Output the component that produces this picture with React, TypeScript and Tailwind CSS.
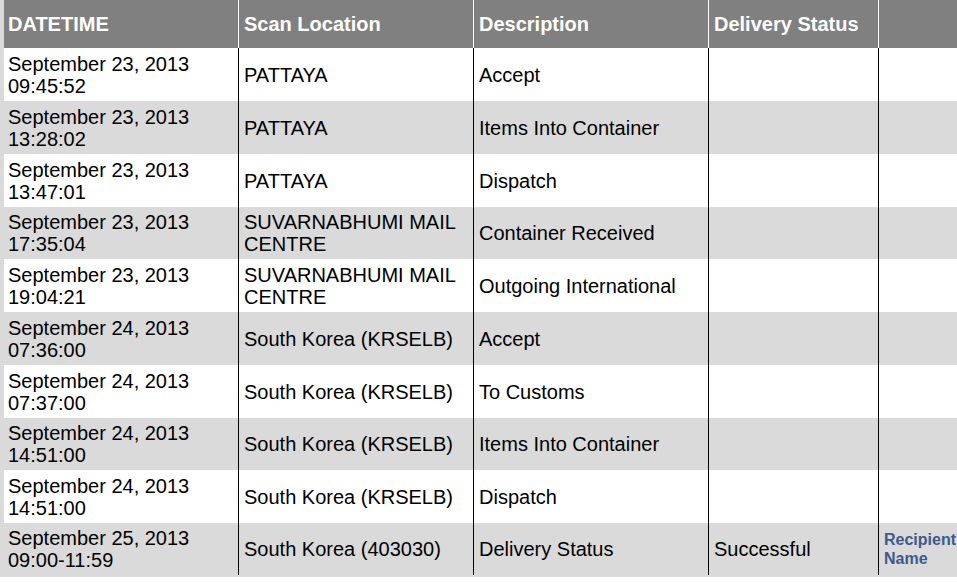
import React from "react";

type Row = { d1: string; d2: string; loc: string[]; desc: string; status?: string; link?: boolean; h: string };

const rows: Row[] = [
  { d1: "September 23, 2013", d2: "09:45:52", loc: ["PATTAYA"], desc: "Accept", h: "h-[53px]" },
  { d1: "September 23, 2013", d2: "13:28:02", loc: ["PATTAYA"], desc: "Items Into Container", h: "h-[53px]" },
  { d1: "September 23, 2013", d2: "13:47:01", loc: ["PATTAYA"], desc: "Dispatch", h: "h-[53px]" },
  { d1: "September 23, 2013", d2: "17:35:04", loc: ["SUVARNABHUMI MAIL", "CENTRE"], desc: "Container Received", h: "h-[52px]" },
  { d1: "September 23, 2013", d2: "19:04:21", loc: ["SUVARNABHUMI MAIL", "CENTRE"], desc: "Outgoing International", h: "h-[53px]" },
  { d1: "September 24, 2013", d2: "07:36:00", loc: ["South Korea (KRSELB)"], desc: "Accept", h: "h-[53px]" },
  { d1: "September 24, 2013", d2: "07:37:00", loc: ["South Korea (KRSELB)"], desc: "To Customs", h: "h-[53px]" },
  { d1: "September 24, 2013", d2: "14:51:00", loc: ["South Korea (KRSELB)"], desc: "Items Into Container", h: "h-[52px]" },
  { d1: "September 24, 2013", d2: "14:51:00", loc: ["South Korea (KRSELB)"], desc: "Dispatch", h: "h-[53px]" },
  { d1: "September 25, 2013", d2: "09:00-11:59", loc: ["South Korea (403030)"], desc: "Delivery Status", status: "Successful", link: true, h: "h-[52px]" },
];

export default function App() {
  return (
    <div className="w-[957px] h-[583px] bg-white overflow-hidden" style={{ fontFamily: '"Liberation Sans", Arial, sans-serif' }}>
      <div className="bg-[#dadada] pl-[4px] pb-[2px] w-[957px]">
        <div className="flex h-[48px] bg-[#808080] text-white font-bold text-[20px] leading-[22px]">
          <div className="w-[234px] flex items-center pl-[4px] pb-[1px]">DATETIME</div>
          <div className="w-[235px] flex items-center pl-[5px] pb-[1px] border-l border-white">Scan Location</div>
          <div className="w-[235px] flex items-center pl-[5px] pb-[1px] border-l border-white">Description</div>
          <div className="w-[170px] flex items-center pl-[5px] pb-[1px] border-l border-white">Delivery Status</div>
          <div className="flex-1 border-l border-white"></div>
        </div>
        {rows.map((r, i) => (
          <div key={i} className={`flex ${r.h} ${i % 2 === 0 ? "bg-white" : "bg-[#dadada]"} text-black text-[20px] leading-[22px]`}>
            <div className="w-[234px] flex flex-col justify-center pl-[4px]">
              <div>{r.d1}</div>
              <div>{r.d2}</div>
            </div>
            <div className="w-[235px] flex flex-col justify-center pl-[5px] border-l border-black">
              {r.loc.map((l, j) => (
                <div key={j}>{l}</div>
              ))}
            </div>
            <div className="w-[235px] flex items-center pl-[5px] border-l border-black">{r.desc}</div>
            <div className="w-[170px] flex items-center pl-[5px] border-l border-black">{r.status ?? ""}</div>
            <div className="flex-1 flex flex-col justify-center pl-[5px] border-l border-black overflow-hidden">
              {r.link && (
                <div className="text-[#3c5a8c] font-bold text-[16px] leading-[19px] whitespace-nowrap">
                  <div>Recipient</div>
                  <div>Name</div>
                </div>
              )}
            </div>
          </div>
        ))}
      </div>
    </div>
  );
}
